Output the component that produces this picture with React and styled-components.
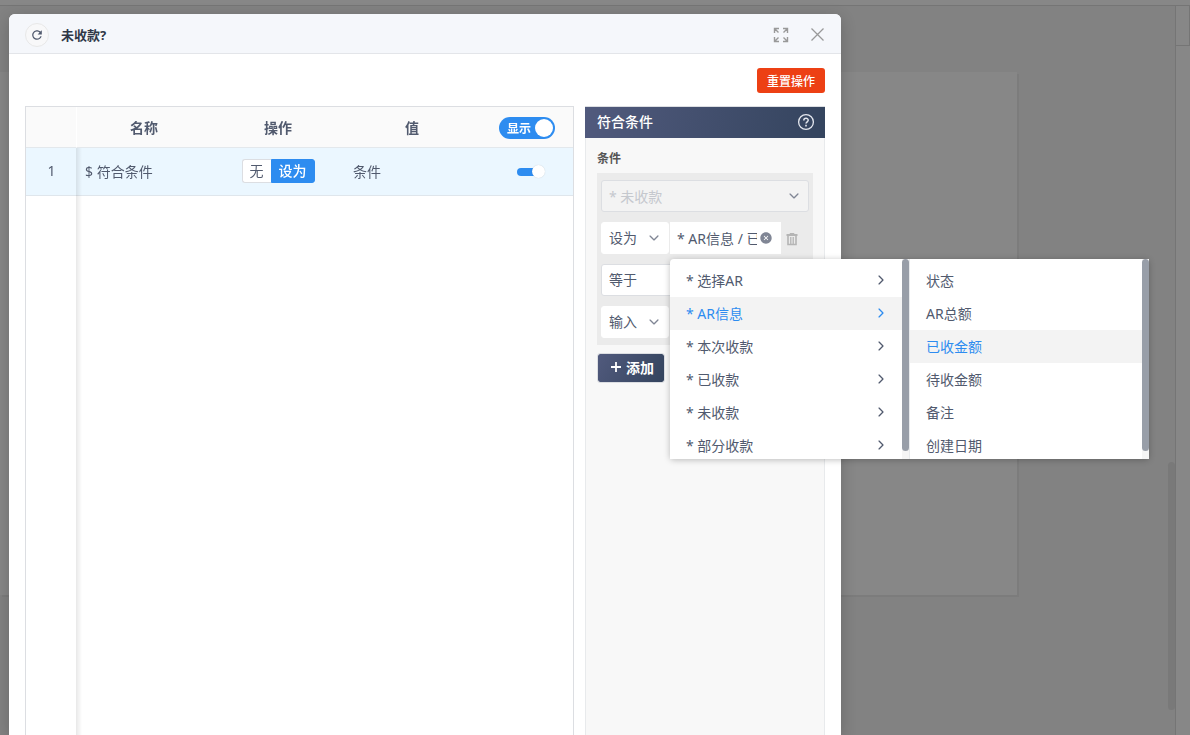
import React, { useState } from 'react'
import styled, { createGlobalStyle, css } from 'styled-components'
import { IoMdRefresh, IoIosArrowDown, IoIosArrowForward, IoIosCloseCircle } from 'react-icons/io'

const GlobalStyle = createGlobalStyle`
    *, *::before, *::after {
        box-sizing:border-box;
    }

    body {
        margin:0;
        overflow:hidden;
    }

    body, button, input, select {
        font-family:"Noto Sans", "Noto Sans CJK SC", sans-serif;
        font-size:14px;
        color:#515a6e;
    }
`

/* page behind the dialog */

const Page = styled.div`
    height:100vh;
    display:flex;
    flex-direction:column;
    background-color:#828282;
`

const TopBar = styled.div`
    height:6px;
    flex:none;
    background-color:#878787;
    border-bottom:1px solid #757575;
`

const Workspace = styled.div`
    flex:1;
    min-height:0;
    display:flex;
`

const CanvasArea = styled.div`
    flex:1;
    display:flex;
    align-items:flex-start;
    padding:66px 151px 0 0;
`

const Canvas = styled.div`
    flex:1;
    height:523px;
    background-color:#878787;
    box-shadow:2px 2px 0 #7c7c7c;
`

const PageScroll = styled.div`
    width:7px;
    padding-top:456px;
`

const PageThumb = styled.div`
    height:248px;
    border-radius:4px;
    background-color:#797979;
`

const SideBar = styled.div`
    width:15px;
    display:flex;
    flex-direction:column;
    align-items:stretch;
    background-color:#878787;
    border-left:1px solid #757575;
`

const SideTab = styled.div`
    height:40px;
    border-right:1px solid #757575;
    border-bottom:1px solid #757575;
`

/* dialog */

const Dialog = styled.section`
    position:fixed;
    top:14px;
    left:9px;
    right:349px;
    bottom:0;
    display:flex;
    flex-direction:column;
    background-color:#fff;
    border-radius:6px 6px 0 0;
    box-shadow:0 4px 16px rgba(0,0,0,0.2);
`

const DialogHeader = styled.header`
    height:40px;
    flex:none;
    display:flex;
    align-items:center;
    padding:2px 16px 0;
    background-color:#f5f7fb;
    border-bottom:1px solid #e3e5e9;
    border-radius:6px 6px 0 0;
`

const Title = styled.h1`
    flex:1;
    margin:0 12px;
    font-size:13px;
    font-weight:700;
    color:#2f3747;
`

const IconButton = styled.button`
    width:16px;
    height:16px;
    margin-left:20px;
    padding:0;
    border:0;
    background:none;
    color:#999;
    cursor:pointer;

    svg {
        display:block;
    }
`

const RefreshButton = styled.button`
    width:24px;
    height:24px;
    display:flex;
    align-items:center;
    justify-content:center;
    padding:0;
    border:1px solid #e8e8e8;
    border-radius:50%;
    background-color:#f8f8f9;
    color:#515a6e;
    cursor:pointer;
`

const DialogBody = styled.div`
    flex:1;
    min-height:0;
    display:flex;
    flex-direction:column;
    padding:14px 16px 0;
`

const Actions = styled.div`
    display:flex;
    justify-content:flex-end;
    margin-bottom:13px;
`

const ResetButton = styled.button`
    height:25px;
    padding:0 10px;
    border:0;
    border-radius:3px;
    background-color:#ed4014;
    color:#fff;
    font-size:12px;
    font-weight:500;
    cursor:pointer;
`

const Columns = styled.div`
    flex:1;
    min-height:0;
    display:flex;
    gap:11px;
`

/* table */

const TableBox = styled.div`
    position:relative;
    flex:1;
    border:1px solid #dcdee2;
    border-bottom:0;

    &::after {
        content:"";
        position:absolute;
        top:41px;
        bottom:0;
        left:50px;
        width:6px;
        background:linear-gradient(to right, rgba(0,0,0,0.09), rgba(0,0,0,0));
    }
`

const Table = styled.table`
    width:100%;
    table-layout:fixed;
    border-collapse:separate;
    border-spacing:0;
`

const Th = styled.th`
    width:${(props) => props.$width || "auto"};
    height:41px;
    padding:0;
    background-color:#fafafa;
    border-bottom:1px solid #e3e8ec;
    font-weight:600;

    &:first-child {
        border-right:1px solid #fff;
    }

    &:last-child {
        padding:2px 0 0 2px;
    }
`

const Td = styled.td`
    height:48px;
    padding:0 8px 2px;
    background-color:#ebf7ff;
    border-bottom:1px solid #dfe6ec;
    text-align:${(props) => props.$align || "left"};
`

const RadioGroup = styled.div`
    display:inline-flex;
    vertical-align:middle;
`

const RadioLabel = styled.label`
    height:24px;
    line-height:22px;
    padding:0 7px;
    border:1px solid #dcdee2;
    border-radius:3px 0 0 3px;
    background-color:#fff;
    cursor:pointer;

    &:last-child {
        border-radius:0 3px 3px 0;
    }

    &:not(:last-child) {
        border-right:0;
    }

    ${(props) => props.$checked && css`
        border-color:#2d8cf0;
        background-color:#2d8cf0;
        color:#fff;
        font-weight:500;
    `}

    input {
        position:absolute;
        opacity:0;
        pointer-events:none;
    }
`

const BigSwitch = styled.label`
    width:56px;
    height:22px;
    display:inline-flex;
    align-items:center;
    justify-content:space-between;
    padding:0 2px 0 8px;
    vertical-align:middle;
    border-radius:11px;
    background-color:${(props) => (props.$on ? "#2d8cf0" : "#ccc")};
    color:#fff;
    font-size:12px;
    font-weight:700;
    cursor:pointer;

    input {
        width:18px;
        height:18px;
        margin:0;
        appearance:none;
        border-radius:50%;
        background-color:#fff;
    }
`

const SmallSwitch = styled.input`
    width:28px;
    height:14px;
    display:flex;
    align-items:center;
    margin:0 auto;
    appearance:none;
    cursor:pointer;

    &::before {
        content:"";
        width:17px;
        height:8px;
        margin-right:-2px;
        border-radius:4px 0 0 4px;
        background-color:${(props) => (props.checked ? "#2d8cf0" : "#ccc")};
    }

    &::after {
        content:"";
        width:13px;
        height:13px;
        border-radius:50%;
        background-color:#fff;
        box-shadow:0 0 1px rgba(0,0,0,0.2);
    }
`

const SwitchCell = styled(Td)`
    padding:0 0 0 10px;
`

/* condition panel */

const Panel = styled.aside`
    width:240px;
    flex:none;
    display:flex;
    flex-direction:column;
    border-top:1px solid #dcdee2;
`

const PanelHeader = styled.header`
    height:31px;
    flex:none;
    display:flex;
    align-items:center;
    justify-content:space-between;
    padding:0 10px 2px 12px;
    background:linear-gradient(100deg, #515a7d, #34445e);
    color:#fff;
`

const PanelTitle = styled.h2`
    margin:0;
    font-size:14px;
    line-height:20px;
    font-weight:500;
`

const PanelBody = styled.div`
    flex:1;
    padding:11px;
    background-color:#f8f8f8;
    border:1px solid #e8eaec;
    border-width:0 1px;
`

const Caption = styled.h3`
    margin:0 0 4px;
    font-size:12px;
    line-height:20px;
    font-weight:700;
    color:#555;
`

const Conditions = styled.div`
    display:flex;
    flex-direction:column;
    gap:10px;
    padding:7px 4px;
    background-color:#ebebeb;
`

const ConditionRow = styled.div`
    height:32px;
    display:flex;
    align-items:center;
    gap:1px;
`

const Field = styled.div`
    position:relative;
    height:32px;
    width:${(props) => props.$width || "auto"};
    flex:${(props) => (props.$width ? "none" : 1)};

    > svg {
        position:absolute;
        top:9px;
        right:8px;
        color:#808695;
        pointer-events:none;
    }
`

const control = css`
    width:100%;
    height:32px;
    display:block;
    padding:0 24px 2px 7px;
    border:1px solid ${(props) => (props.$outlined ? "#dcdee2" : "#fff")};
    border-radius:3px;
    outline:0;
    background-color:#fff;
    color:#515a6e;
`

const Select = styled.select`
    ${control}
    appearance:none;

    &:disabled {
        padding-bottom:0;
        background-color:#f3f3f3;
        color:#c5c8ce;
        opacity:1;
    }
`

const TextInput = styled.input`
    ${control}
    padding:0 23px 0 6px;
    border-radius:0;
`

const TrashButton = styled.button`
    width:12px;
    height:14px;
    margin:2px 0 0 4px;
    padding:0;
    border:0;
    background:none;
    color:#b5b5b5;
    cursor:pointer;

    svg {
        display:block;
    }
`

const AddButton = styled.button`
    height:30px;
    display:flex;
    align-items:center;
    gap:4px;
    margin-top:8px;
    padding:0 10px 2px 12px;
    border:1px solid #dcdee2;
    border-radius:3px;
    background:linear-gradient(120deg, #515a7d, #34445e) padding-box;
    color:#fff;
    font-weight:600;
    cursor:pointer;
`

/* cascading menu */

const Menu = styled.div`
    position:absolute;
    z-index:10;
    top:37px;
    left:0;
    display:flex;
    border-radius:4px;
    background-color:#fff;
    box-shadow:0 1px 6px rgba(0,0,0,0.25);
`

const MenuColumn = styled.div`
    height:200px;
    display:flex;

    &:not(:last-child) {
        border-right:1px solid #e8eaec;
    }
`

const MenuList = styled.ul`
    width:232px;
    margin:0;
    padding:5px 0 0;
    overflow-y:auto;
    list-style:none;
    scrollbar-width:none;
`

const MenuTrack = styled.div`
    width:7px;
    background-color:#f5f5f5;
`

const MenuThumb = styled.div`
    height:96%;
    border-radius:4px;
    background-color:#989ea8;
`

const MenuItem = styled.li`
    height:33px;
    display:flex;
    align-items:center;
    justify-content:space-between;
    padding:0 14px 1px 16px;
    background-color:${(props) => (props.$active ? "#f3f3f3" : "#fff")};
    color:${(props) => (props.$active ? "#2d8cf0" : "#515a6e")};
    cursor:pointer;
`

const sources = ["* 选择AR", "* AR信息", "* 本次收款", "* 已收款", "* 未收款", "* 部分收款"]
const fields = ["状态", "AR总额", "已收金额", "待收金额", "备注", "创建日期"]

const ExpandIcon = () => (
    <svg width="16" height="16" viewBox="0 0 16 16" fill="none" stroke="currentColor" strokeWidth="1.4">
        <path d="M1.5 6V1.5H6M1.5 1.5L5.5 5.5" />
        <path d="M10 1.5H14.5V6M14.5 1.5L10.5 5.5" />
        <path d="M1.5 10V14.5H6M1.5 14.5L5.5 10.5" />
        <path d="M10 14.5H14.5V10M14.5 14.5L10.5 10.5" />
    </svg>
)

const CloseIcon = () => (
    <svg width="16" height="16" viewBox="0 0 16 16" fill="none" stroke="currentColor" strokeWidth="1.3">
        <path d="M2.5 1.5L14.5 13.5M14.5 1.5L2.5 13.5" />
    </svg>
)

const HelpIcon = () => (
    <svg width="18" height="18" viewBox="0 0 18 18" fill="none" stroke="#e4e7ee" strokeWidth="1.3">
        <circle cx="9" cy="9" r="7.4" />
        <path d="M6.8 7.4C6.8 4.6 11.2 4.6 11.2 7.2C11.2 8.8 9 8.8 9 10.6" strokeWidth="1.5" />
        <path d="M9 11.8V13.4" strokeWidth="1.6" />
    </svg>
)

const TrashIcon = () => (
    <svg width="12" height="14" viewBox="0 0 12 14" fill="none" stroke="currentColor">
        <path d="M0.5 3H11.5" strokeWidth="2" />
        <path d="M4 2.5V1.5H8V2.5" />
        <path d="M2 4V12.5H10V4" strokeWidth="1.6" />
        <path d="M4.5 5V12M6 5V12M7.5 5V12" strokeWidth="0.9" />
    </svg>
)

const PlusIcon = () => (
    <svg width="12" height="12" viewBox="0 0 12 12" fill="none" stroke="currentColor" strokeWidth="1.8">
        <path d="M6 1V11M1 6H11" />
    </svg>
)

export default function App() {
    const [showAll, setShowAll] = useState(true)
    const [visible, setVisible] = useState(true)
    const [mode, setMode] = useState("设为")
    const [source, setSource] = useState("* AR信息")
    const [field, setField] = useState("已收金额")

    return (
        <>
            <GlobalStyle />
            <Page>
                <TopBar />
                <Workspace>
                    <CanvasArea>
                        <Canvas />
                    </CanvasArea>
                    <PageScroll>
                        <PageThumb />
                    </PageScroll>
                    <SideBar>
                        <SideTab />
                    </SideBar>
                </Workspace>
            </Page>
            <Dialog role="dialog" aria-labelledby="dialog-title">
                <DialogHeader>
                    <RefreshButton aria-label="刷新"><IoMdRefresh size={14} /></RefreshButton>
                    <Title id="dialog-title">未收款?</Title>
                    <IconButton aria-label="全屏"><ExpandIcon /></IconButton>
                    <IconButton aria-label="关闭"><CloseIcon /></IconButton>
                </DialogHeader>
                <DialogBody>
                    <Actions>
                        <ResetButton>重置操作</ResetButton>
                    </Actions>
                    <Columns>
                        <TableBox>
                            <Table>
                                <thead>
                                    <tr>
                                        <Th $width="51px" />
                                        <Th>名称</Th>
                                        <Th>操作</Th>
                                        <Th>值</Th>
                                        <Th $width="94px">
                                            <BigSwitch $on={showAll}>
                                                显示
                                                <input
                                                type="checkbox"
                                                checked={showAll}
                                                onChange={(e) => setShowAll(e.target.checked)} />
                                            </BigSwitch>
                                        </Th>
                                    </tr>
                                </thead>
                                <tbody>
                                    <tr>
                                        <Td $align="center">1</Td>
                                        <Td>$ 符合条件</Td>
                                        <Td $align="center">
                                            <RadioGroup>
                                                {["无", "设为"].map((item) => (
                                                    <RadioLabel key={item} $checked={mode === item}>
                                                        <input
                                                        type="radio"
                                                        name="mode"
                                                        checked={mode === item}
                                                        onChange={() => setMode(item)} />
                                                        {item}
                                                    </RadioLabel>
                                                ))}
                                            </RadioGroup>
                                        </Td>
                                        <Td>条件</Td>
                                        <SwitchCell>
                                            <SmallSwitch
                                            type="checkbox"
                                            aria-label="显示"
                                            checked={visible}
                                            onChange={(e) => setVisible(e.target.checked)} />
                                        </SwitchCell>
                                    </tr>
                                </tbody>
                            </Table>
                        </TableBox>
                        <Panel>
                            <PanelHeader>
                                <PanelTitle>符合条件</PanelTitle>
                                <HelpIcon />
                            </PanelHeader>
                            <PanelBody>
                                <Caption>条件</Caption>
                                <Conditions>
                                    <ConditionRow>
                                        <Field>
                                            <Select $outlined disabled aria-label="条件">
                                                <option>* 未收款</option>
                                            </Select>
                                            <IoIosArrowDown size={14} />
                                        </Field>
                                    </ConditionRow>
                                    <ConditionRow>
                                        <Field $width="68px">
                                            <Select aria-label="操作">
                                                <option>设为</option>
                                            </Select>
                                            <IoIosArrowDown size={14} />
                                        </Field>
                                        <Field $width="111px">
                                            <TextInput readOnly aria-label="字段" value={`${source} / ${field}`} />
                                            <IoIosCloseCircle size={14} />
                                            <Menu>
                                                <MenuColumn>
                                                    <MenuList>
                                                        {sources.map((item) => (
                                                            <MenuItem key={item} $active={item === source} onClick={() => setSource(item)}>
                                                                {item}
                                                                <IoIosArrowForward size={14} />
                                                            </MenuItem>
                                                        ))}
                                                    </MenuList>
                                                    <MenuTrack><MenuThumb /></MenuTrack>
                                                </MenuColumn>
                                                <MenuColumn>
                                                    <MenuList>
                                                        {fields.map((item) => (
                                                            <MenuItem key={item} $active={item === field} onClick={() => setField(item)}>
                                                                {item}
                                                            </MenuItem>
                                                        ))}
                                                    </MenuList>
                                                    <MenuTrack><MenuThumb /></MenuTrack>
                                                </MenuColumn>
                                            </Menu>
                                        </Field>
                                        <TrashButton aria-label="删除"><TrashIcon /></TrashButton>
                                    </ConditionRow>
                                    <ConditionRow>
                                        <Field>
                                            <Select $outlined aria-label="比较">
                                                <option>等于</option>
                                            </Select>
                                        </Field>
                                    </ConditionRow>
                                    <ConditionRow>
                                        <Field $width="68px">
                                            <Select aria-label="类型">
                                                <option>输入</option>
                                            </Select>
                                            <IoIosArrowDown size={14} />
                                        </Field>
                                        <Field $width="111px">
                                            <TextInput aria-label="值" />
                                        </Field>
                                    </ConditionRow>
                                </Conditions>
                                <AddButton><PlusIcon />添加</AddButton>
                            </PanelBody>
                        </Panel>
                    </Columns>
                </DialogBody>
            </Dialog>
        </>
    )
}
